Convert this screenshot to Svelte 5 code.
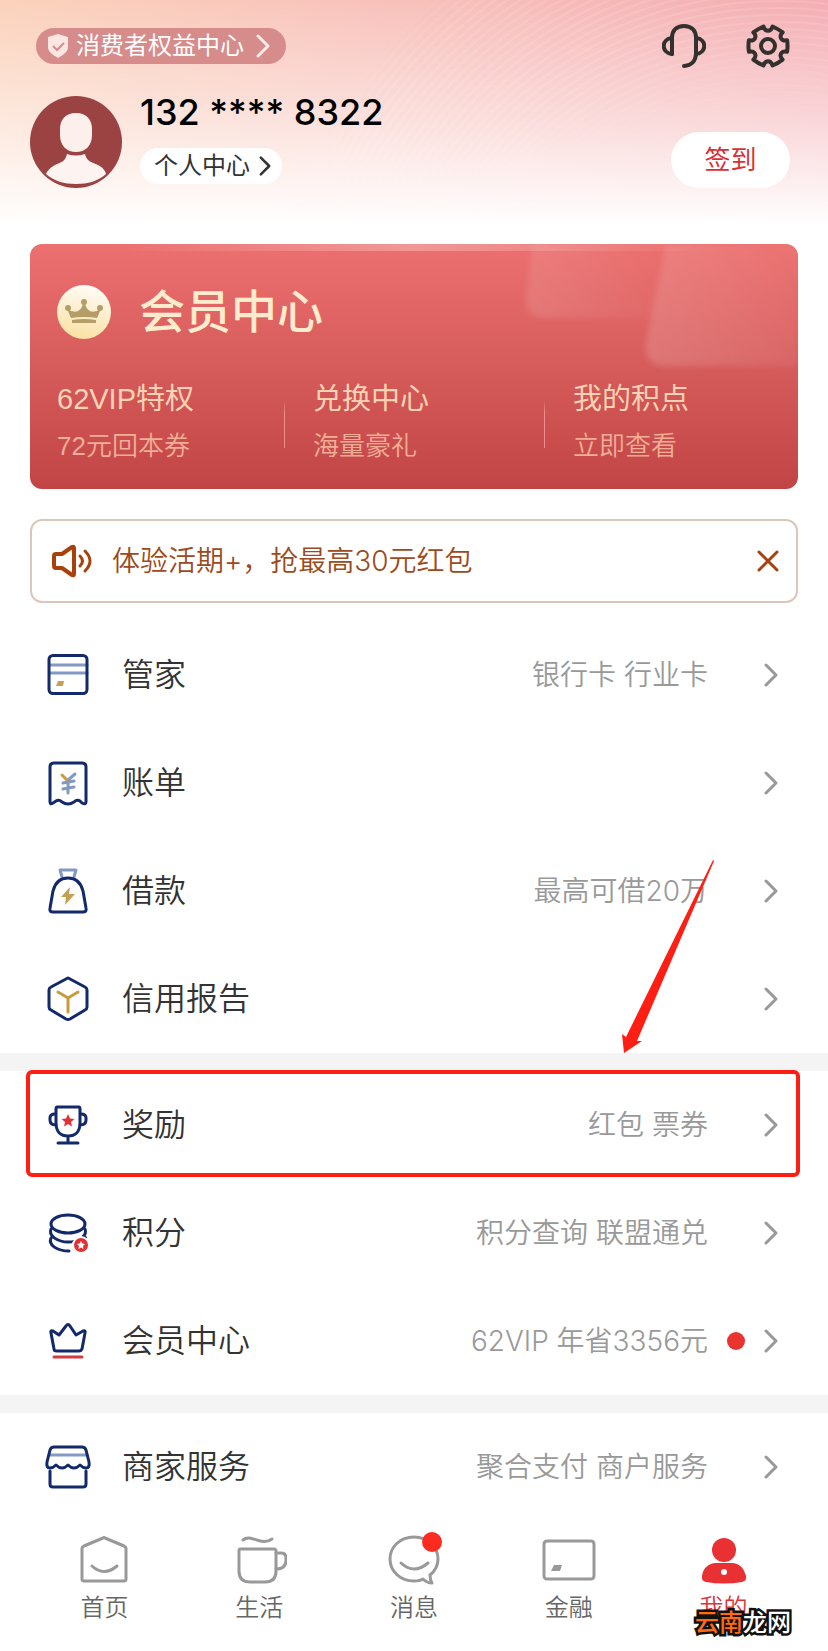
<script>
  let showNotice = $state(true);
  let active = $state("mine");

  const benefits = [
    { title: "62VIP特权", sub: "72元回本券" },
    { title: "兑换中心", sub: "海量豪礼" },
    { title: "我的积点", sub: "立即查看" },
  ];

  const groups = [
    [
      { icon: "card", label: "管家", value: "银行卡 行业卡" },
      { icon: "bill", label: "账单", value: "" },
      { icon: "loan", label: "借款", value: "最高可借20万" },
      { icon: "credit", label: "信用报告", value: "" },
    ],
    [
      { icon: "trophy", label: "奖励", value: "红包 票券", marked: true },
      { icon: "coins", label: "积分", value: "积分查询 联盟通兑" },
      { icon: "crown", label: "会员中心", value: "62VIP 年省3356元", dot: true },
    ],
    [{ icon: "shop", label: "商家服务", value: "聚合支付 商户服务" }],
  ];

  const tabs = [
    { id: "home", label: "首页" },
    { id: "life", label: "生活" },
    { id: "message", label: "消息" },
    { id: "finance", label: "金融" },
    { id: "mine", label: "我的" },
  ];

  // six teeth, with a rounded notch between each pair
  const gearPath = () => {
    const at = (r, deg) => {
      const a = (deg * Math.PI) / 180;
      return `${(22 + r * Math.cos(a)).toFixed(1)} ${(22 + r * Math.sin(a)).toFixed(1)}`;
    };
    let d = `M${at(20, -17)}`;
    for (let t = 0; t < 360; t += 60) {
      d += `Q${at(20, t)} ${at(20, t + 17)}`;
      d += `C${at(14, t + 18)} ${at(14, t + 42)} ${at(20, t + 43)}`;
    }
    return d + "Z";
  };
</script>

<svelte:head>
  <title>我的</title>
</svelte:head>

{#snippet chevron(cls)}
  <svg class={cls} viewBox="0 0 14 24" aria-hidden="true">
    <path d="M2 2l10 10L2 22" />
  </svg>
{/snippet}

<div class="page">
  <header>
    <div class="top">
      <a class="rights" href="#rights">
        <svg viewBox="0 0 20 24" width="20" height="24">
          <path d="M10 0L20 3V13C20 18 15 21 10 24C5 21 0 18 0 13V3Z" fill="#fbe6e2" />
          <path d="M5 12l4 4 7-7" fill="none" stroke="#d68c8b" stroke-width="2" />
        </svg>
        <span>消费者权益中心</span>
        {@render chevron("chev light")}
      </a>
      <div class="tools">
        <button aria-label="客服">
          <svg viewBox="0 0 44 44" width="44" height="44">
            <path d="M10 30V14C10 6 15 2 22 2S34 6 34 14V29C34 37 29 42 22 42" />
            <path d="M10 14C-1 15 -1 29 10 30M34 14C45 15 45 29 34 30" />
          </svg>
        </button>
        <button aria-label="设置">
          <svg viewBox="0 0 44 44" width="44" height="44">
            <path d={gearPath()} />
            <circle cx="22" cy="22" r="7" />
          </svg>
        </button>
      </div>
    </div>

    <div class="profile">
      <svg class="avatar" viewBox="0 0 92 92" width="92" height="92">
        <circle cx="46" cy="46" r="46" fill="#9b4243" />
        <path
          d="M46 17C57 17 62 24 62 33V39C62 50 55 56 46 56S30 50 30 39V33C30 24 35 17 46 17Z"
          fill="#fdefeb"
        />
        <path
          d="M37 58Q46 61 55 58C57 66 62 66 68 69C73 72 75 74 76 78C68 85 58 88 46 88S24 85 16 78C18 74 20 72 25 69C31 66 35 66 37 58Z"
          fill="#fdf3f0"
        />
      </svg>
      <div class="who">
        <strong>132 **** 8322</strong>
        <a class="personal" href="#personal">
          个人中心 {@render chevron("chev dark")}
        </a>
      </div>
      <button class="signin">签到</button>
    </div>
  </header>

  <main>
    <section class="member">
      <svg class="glow" viewBox="0 0 280 124" width="280" height="124" aria-hidden="true">
        <defs>
          <linearGradient id="g1" x1="0" y1="0.6" x2="1" y2="0.3">
            <stop offset="0" stop-color="#fff" stop-opacity="0.12" />
            <stop offset="1" stop-color="#fff" stop-opacity="0" />
          </linearGradient>
          <linearGradient id="g2" x1="0" y1="0.8" x2="1" y2="0.4">
            <stop offset="0" stop-color="#fff" stop-opacity="0.16" />
            <stop offset="1" stop-color="#fff" stop-opacity="0.04" />
          </linearGradient>
        </defs>
        <path d="M14 0L8 52Q6 74 26 74H134L148 0Z" fill="url(#g1)" />
        <path d="M148 0L128 98Q125 122 148 122H280V0Z" fill="url(#g2)" />
      </svg>
      <div class="member-title">
        <svg viewBox="0 0 54 54" width="54" height="54">
          <defs>
            <linearGradient id="gold" x1="0.6" y1="0" x2="0.4" y2="1">
              <stop offset="0" stop-color="#fffdf8" />
              <stop offset="1" stop-color="#fae0a2" />
            </linearGradient>
          </defs>
          <circle cx="27" cy="27" r="27" fill="url(#gold)" />
          <g fill="#b59d68">
            <circle cx="27" cy="17" r="3" />
            <circle cx="11" cy="23" r="3" />
            <circle cx="43" cy="23" r="3" />
            <path d="M10 24Q17 28 21 26Q25 24 26 18H28Q29 24 33 26Q37 28 44 24L40 33Q27 31 14 33Z" />
            <path d="M15 35Q27 33 39 35V38H15Z" />
          </g>
        </svg>
        <h1>会员中心</h1>
      </div>
      <div class="benefits">
        {#each benefits as item}
          <a href="#benefit">
            <b>{item.title}</b>
            <span>{item.sub}</span>
          </a>
        {/each}
      </div>
    </section>

    {#if showNotice}
      <section class="notice">
        <svg viewBox="0 0 40 40" width="40" height="40">
          <path d="M4 13H10L20 6Q22 5 22 7V33Q22 35 20 34L10 27H4Q2 27 2 25V15Q2 13 4 13Z" stroke-width="4" />
          <path d="M28 15Q33 20 28 25M33 10Q43 20 33 30" stroke-width="3" />
        </svg>
        <p>体验活期+，抢最高30元红包</p>
        <button aria-label="关闭" onclick={() => (showNotice = false)}>
          <svg viewBox="0 0 22 22" width="22" height="22">
            <path d="M2 2L20 20M20 2L2 20" stroke-width="3" />
          </svg>
        </button>
      </section>
    {/if}

    {#each groups as group, i}
      <ul>
        {#each group as row}
          <li class:marked={row.marked}>
            <a href="#{row.icon}">
              <svg class="icon" viewBox="0 0 48 48" width="48" height="48">
                {#if row.icon === "card"}
                  <path class="soft" d="M6 14H43M6 22H43" />
                  <rect x="5" y="4.500" width="38" height="38" rx="4" />
                  <path class="gold" d="M14 30H20L19 35H12Z" />
                {:else if row.icon === "bill"}
                  <path d="M6 43V8Q6 4 10 4H38Q42 4 42 8V43Q42 46 38 44L36 42Q33 40 30 43Q24 47 18 43Q15 40 12 42L9 44Q6 46 6 43Z" />
                  <path class="soft" d="M31 15L24 21V34M19 24L30 22M19 30L30 28" />
                  <path class="gold-line" d="M18 16L23 21" />
                {:else if row.icon === "loan"}
                  <path class="soft" d="M18 10L16 3H32L30 10" />
                  <path d="M24 11C33 11 37 16 39 24L42 41Q43 45 39 45H9Q5 45 6 41L9 24C11 16 15 11 24 11Z" />
                  <path class="gold" d="M26 20L17 30H22L21 38L31 27H25Z" />
                {:else if row.icon === "credit"}
                  <path d="M22 4Q24 2 26 4L41 12Q43 13 43 15V32Q43 34 41 35L26 44Q24 45 22 44L7 35Q5 34 5 32V15Q5 13 7 12Z" />
                  <path class="gold-line" d="M14 17L24 23L34 17M24 23V37" />
                {:else if row.icon === "trophy"}
                  <path d="M13 6H35Q36 6 36 8V22C36 31 31 35 24 35S12 31 12 22V8Q12 6 13 6ZM24 35V41M14 42H34" />
                  <path d="M11 13Q6 13 6 17V19Q6 24 12 24M37 13Q42 13 42 17V19Q42 24 36 24" />
                  <path class="red" d="M24 13L26 17.500L30.500 18L27 21L28 25.500L24 23L20 25.500L21 21L17.500 18L22 17.500Z" />
                {:else if row.icon === "coins"}
                  <ellipse cx="24" cy="15" rx="17" ry="9" />
                  <path d="M7 20C4 27 14 33 24 33S44 27 41 20M7 29C4 36 13 42 25 42M41 28Q42 29 41 30" />
                  <circle cx="37" cy="36" r="9" fill="#fff" stroke="none" />
                  <circle class="red" cx="37" cy="36" r="7" />
                  <path d="M37 32L38.300 34.500L41 35L39 37L39.500 40L37 38.500L34.500 40L35 37L33 35L35.700 34.500Z" fill="#fff" stroke="none" />
                {:else if row.icon === "crown"}
                  <path d="M22 9Q24 6 26 9L32 18L39 14Q42 13 41 16L38 32Q37 34 35 34H13Q10 34 10 32L7 16Q6 13 9 14L15 18Z" />
                  <path class="red-line" d="M10 40H38" />
                {:else}
                  <path class="soft" d="M5 12H43" />
                  <path d="M6 28V41Q6 44 9 44H39Q42 44 42 41V28" />
                  <path d="M10 4H38Q41 4 42 7L45 19Q46 25 42 25Q39 25 36 22Q33 25 30 25T24 22Q21 25 18 25T12 22Q9 25 6 25Q2 25 3 19L6 7Q7 4 10 4Z" />
                {/if}
              </svg>
              <span class="label">{row.label}</span>
              <span class="value">{row.value}</span>
              <span class="slot">
                {#if row.dot}<i class="dot"></i>{/if}
              </span>
              {@render chevron("chev")}
            </a>
          </li>
        {/each}
        {#if i === 0}
          <svg class="arrow" viewBox="0 0 94 194" width="94" height="194" aria-hidden="true">
            <path d="M93 0L94 1L17 181L22 181L4 193L2 174L6 177Z" />
          </svg>
        {/if}
      </ul>
    {/each}
  </main>

  <nav>
    {#each tabs as tab}
      <button class:active={active === tab.id} onclick={() => (active = tab.id)}>
        <svg viewBox="0 0 56 56" width="56" height="56">
          {#if tab.id === "home"}
            <path d="M8 14L27 6Q28 5 29 6L48 14Q50 15 50 16V47Q50 49 48 49H8Q6 49 6 47V16Q6 15 8 14Z" />
            <path d="M16 34Q28 45 41 34" />
          {:else if tab.id === "life"}
            <path d="M9 17H43Q45 17 45 19V39Q45 50 34 50H19Q8 50 8 39V19Q8 17 9 17Z" />
            <path d="M45 21H50Q55 21 55 26V28Q55 37 45 37M12 8C20 1 30 15 41 7" />
          {:else if tab.id === "message"}
            <path d="M37 47C34 49 31 49 28 49C14 49 4 39 4 27S14 5 28 5S52 15 52 27C52 34 49 39 44 43Q44 48 46 51Q41 51 37 47Z" />
            <path d="M15 31Q28 43 42 31" />
            <circle cx="46" cy="10" r="10" fill="#fd2a20" stroke="none" />
          {:else if tab.id === "finance"}
            <rect x="3" y="9" width="50" height="38" rx="3" />
            <path d="M13 33H21L19 39H10Z" fill="#999" stroke="none" />
          {:else}
            <circle class="solid" cx="28" cy="18" r="12" />
            <path class="solid" d="M20 31H36C43 31 48 36 50 44Q51 49 46 50Q28 53 10 50Q5 49 6 44C7 36 13 31 20 31Z" />
            <circle cx="28" cy="40" r="3" fill="#fff" stroke="none" />
          {/if}
        </svg>
        <span>{tab.label}</span>
      </button>
    {/each}
    <div class="watermark"><em>云南</em>龙网</div>
  </nav>
</div>

<style>
  :global(body) {
    margin: 0;
    background: #fff;
  }

  .page {
    font-family: "Liberation Sans", "Noto Sans CJK SC", sans-serif;
    color: #333;
  }

  a {
    color: inherit;
    text-decoration: none;
  }

  button {
    font: inherit;
    color: inherit;
    border: 0;
    padding: 0;
    background: none;
    cursor: pointer;
  }

  svg {
    display: block;
    flex: none;
  }

  .chev {
    width: 14px;
    height: 24px;
    fill: none;
    stroke: #999;
    stroke-width: 3;
    stroke-linecap: round;
    stroke-linejoin: round;

    &.light {
      stroke: #fbeae6;
    }

    &.dark {
      height: 20px;
      stroke: #333;
    }
  }

  header {
    position: relative;
    padding: 24px 38px 56px 30px;
    background:
      linear-gradient(to bottom, rgba(255, 255, 255, 0) 0, rgba(255, 255, 255, 0.5) 120px, #fff 226px),
      linear-gradient(to right, #fbd2bb 0%, #f8c2bb 45%, #f4adb3 100%);

    &::before {
      content: "";
      position: absolute;
      inset: 0;
      background: repeating-radial-gradient(
        circle at 94% 400px,
        rgba(255, 255, 255, 0.14) 0,
        rgba(255, 255, 255, 0) 2px,
        rgba(255, 255, 255, 0) 5px,
        rgba(255, 255, 255, 0.14) 7px
      );
      mask-image: radial-gradient(circle at 94% 400px, transparent 260px, #000 380px, #000 500px, transparent 540px);
    }
  }

  .top,
  .profile {
    position: relative;
    display: flex;
    justify-content: space-between;
  }

  .top {
    align-items: center;
    padding-left: 6px;
  }

  .rights {
    display: flex;
    align-items: center;
    gap: 8px;
    height: 36px;
    padding: 0 16px 0 12px;
    border-radius: 18px;
    background: #d68c8b;
    color: #fff;
    font-size: 24px;
    line-height: 36px;

    .chev {
      margin-left: 4px;
    }
  }

  .tools {
    display: flex;
    gap: 40px;

    svg {
      fill: none;
      stroke: #33302d;
      stroke-width: 4;
      stroke-linecap: round;
      stroke-linejoin: round;
    }
  }

  .profile {
    margin-top: 28px;
  }

  .who {
    flex: 1;
    display: flex;
    flex-direction: column;
    align-items: flex-start;
    gap: 20px;
    margin-left: 18px;

    strong {
      font-family: Inter, sans-serif;
      font-size: 36px;
      font-weight: 500;
      line-height: 32px;
      color: #000;
    }
  }

  .personal {
    display: flex;
    align-items: center;
    gap: 8px;
    height: 36px;
    padding: 0 10px 0 14px;
    border-radius: 18px;
    background: #fff;
    font-size: 24px;
    line-height: 36px;
  }

  .signin {
    align-self: flex-end;
    width: 119px;
    height: 56px;
    border-radius: 28px;
    background: #fff;
    color: #dc2f33;
    font-size: 26px;
    line-height: 36px;
  }

  .member {
    position: relative;
    margin: 0 30px;
    padding: 40px 0 25px;
    border-radius: 12px;
    overflow: hidden;
    background: linear-gradient(to bottom, #ec706f 0%, #d65b5b 50%, #c24545 100%);

    &::before {
      content: "";
      position: absolute;
      inset: 0 0 auto;
      height: 7px;
      background: linear-gradient(to right, transparent 10%, rgba(255, 255, 255, 0.28) 50%, transparent 90%);
    }
  }

  .glow {
    position: absolute;
    top: 0;
    right: 0;
    filter: blur(3px);
  }

  .member-title {
    display: flex;
    align-items: center;
    gap: 28px;
    padding-left: 27px;

    h1 {
      margin: 0;
      color: #ffebcd;
      font-size: 46px;
      font-weight: 500;
      line-height: 56px;
    }
  }

  .benefits {
    position: relative;
    display: grid;
    grid-template-columns: 254fr 260fr 254fr;
    margin-top: 39px;

    a {
      display: flex;
      flex-direction: column;
      gap: 9px;
      padding-left: 27px;
    }

    a + a {
      padding-left: 28px;
      border-left: 1px solid;
      border-image: linear-gradient(to bottom, transparent 25%, #e8908a 40%, #e8908a 80%, transparent 80%) 1;
    }

    b {
      color: #fbd3b4;
      font-size: 29px;
      font-weight: 400;
      line-height: 40px;
    }

    span {
      color: #f0ae97;
      font-size: 26px;
      font-weight: 350;
      line-height: 36px;
    }
  }

  .notice {
    display: flex;
    align-items: center;
    box-sizing: border-box;
    height: 84px;
    margin: 30px 30px 18px;
    padding: 0 17px 0 20px;
    border: 2px solid #dcc6ba;
    border-radius: 12px;

    p {
      flex: 1;
      margin: 0 0 0 20px;
      color: #9c4a20;
      font-family: Inter, "Noto Sans CJK SC", sans-serif;
      font-size: 28px;
      font-weight: 350;
      line-height: 40px;
    }

    svg {
      fill: none;
      stroke: #a8410c;
      stroke-linecap: round;
      stroke-linejoin: round;
    }
  }

  ul {
    position: relative;
    margin: 0;
    padding: 0;
    list-style: none;
  }

  ul + ul {
    border-top: 18px solid #f4f4f4;
  }

  li a {
    display: flex;
    align-items: center;
    height: 108px;
    padding: 0 50px 0 44px;
  }

  .marked {
    position: relative;

    &::after {
      content: "";
      position: absolute;
      inset: -1px 28px 2px 26px;
      border: 4px solid #ff1e14;
      border-radius: 6px;
      pointer-events: none;
    }
  }

  .icon {
    fill: none;
    stroke: #12296a;
    stroke-width: 3;
    stroke-linecap: round;
    stroke-linejoin: round;

    .soft {
      stroke: #8199c3;
    }

    .gold {
      fill: #c79f52;
      stroke: none;
    }

    .gold-line {
      stroke: #c99b3c;
    }

    .red {
      fill: #e03235;
      stroke: none;
    }

    .red-line {
      stroke: #d23b40;
    }
  }

  .label {
    margin-left: 30px;
    font-size: 32px;
    font-weight: 350;
    line-height: 48px;
  }

  .value {
    flex: 1;
    text-align: right;
    color: #999;
    font-family: Inter, "Noto Sans CJK SC", sans-serif;
    font-size: 28px;
    font-weight: 350;
    line-height: 40px;
  }

  .slot {
    display: flex;
    justify-content: center;
    width: 56px;
  }

  .dot {
    width: 18px;
    height: 18px;
    border-radius: 50%;
    background: #e93430;
  }

  .arrow {
    position: absolute;
    top: 239px;
    right: 114px;
    fill: #ff1e14;
    pointer-events: none;
  }

  nav {
    position: relative;
    display: flex;
    padding: 11px 27px 27px;

    button {
      flex: 1;
      display: flex;
      flex-direction: column;
      align-items: center;
      gap: 4px;
      color: #666;
      font-size: 24px;
      font-weight: 350;
      line-height: 32px;
    }

    svg {
      fill: none;
      stroke: #999;
      stroke-width: 3;
      stroke-linecap: round;
      stroke-linejoin: round;
    }

    .solid {
      fill: #999;
      stroke: none;
    }

    .active {
      color: #dc3438;

      .solid {
        fill: #e93033;
      }
    }
  }

  .watermark {
    position: absolute;
    right: 37px;
    bottom: 12px;
    color: #fff;
    font-size: 24px;
    font-weight: 500;
    line-height: 32px;
    -webkit-text-stroke: 5px #111;
    paint-order: stroke fill;
    pointer-events: none;

    em {
      color: #ff6a10;
      font-style: normal;
    }
  }
</style>
